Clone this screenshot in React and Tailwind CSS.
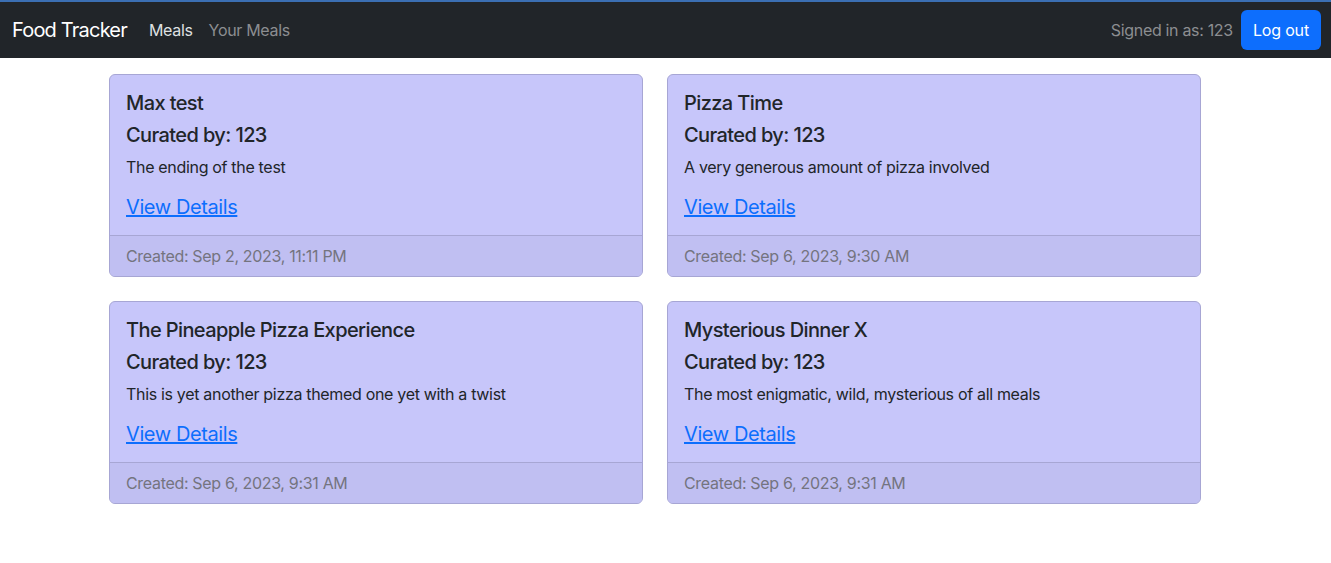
export default function App() {
  const meals = [
    { title: "Max test", desc: "The ending of the test", created: "Created: Sep 2, 2023, 11:11 PM" },
    { title: "Pizza Time", desc: "A very generous amount of pizza involved", created: "Created: Sep 6, 2023, 9:30 AM" },
    { title: "The Pineapple Pizza Experience", desc: "This is yet another pizza themed one yet with a twist", created: "Created: Sep 6, 2023, 9:31 AM" },
    { title: "Mysterious Dinner X", desc: "The most enigmatic, wild, mysterious of all meals", created: "Created: Sep 6, 2023, 9:31 AM" },
  ];
  return (
    <div className="min-h-[563px] bg-white" style={{ fontFamily: "Inter, 'Noto Sans', sans-serif" }}>
      <nav className="h-[58px] bg-[#212529] border-t-2 border-[#3b6fb3] flex items-center pl-3 pr-[10px]">
        <span className="text-[20px] text-white mr-[22px] leading-[30px] tracking-[-0.04em]">Food Tracker</span>
        <span className="text-[16px] text-[#dfe0e1] mr-4 tracking-[-0.02em]">Meals</span>
        <span className="text-[16px] text-[#8c8e91] tracking-[-0.02em]">Your Meals</span>
        <div className="ml-auto flex items-center">
          <span className="text-[16px] text-[#8c8e91] mr-2 tracking-[-0.02em]">Signed in as: 123</span>
          <button className="h-[40px] px-3 rounded-md bg-[#0d6efd] text-white text-[16px] tracking-[-0.01em]">Log out</button>
        </div>
      </nav>
      <div className="ml-[109px] mt-4 grid grid-cols-[534px_534px] gap-6">
        {meals.map((m, i) => (
          <div key={i} className="rounded-md border border-[#a7a6d4] bg-[#c7c6fa] overflow-hidden text-[#212529]">
            <div className="p-4">
              <div className="text-[20px] font-medium leading-6 mb-2 tracking-[-0.03em]">{m.title}</div>
              <div className="text-[20px] font-medium leading-6 mb-2 tracking-[-0.03em]">Curated by: 123</div>
              <p className="text-[16px] leading-6 mb-4 tracking-[-0.02em]">{m.desc}</p>
              <a href="#" className="text-[20px] leading-6 text-[#0d6efd] underline block tracking-[-0.02em]">View Details</a>
            </div>
            <div className="border-t border-[#a7a6d4] bg-[#c0bff2] px-4 py-2 text-[16px] leading-6 text-[#74747f] tracking-[-0.02em]">
              {m.created}
            </div>
          </div>
        ))}
      </div>
    </div>
  );
}
